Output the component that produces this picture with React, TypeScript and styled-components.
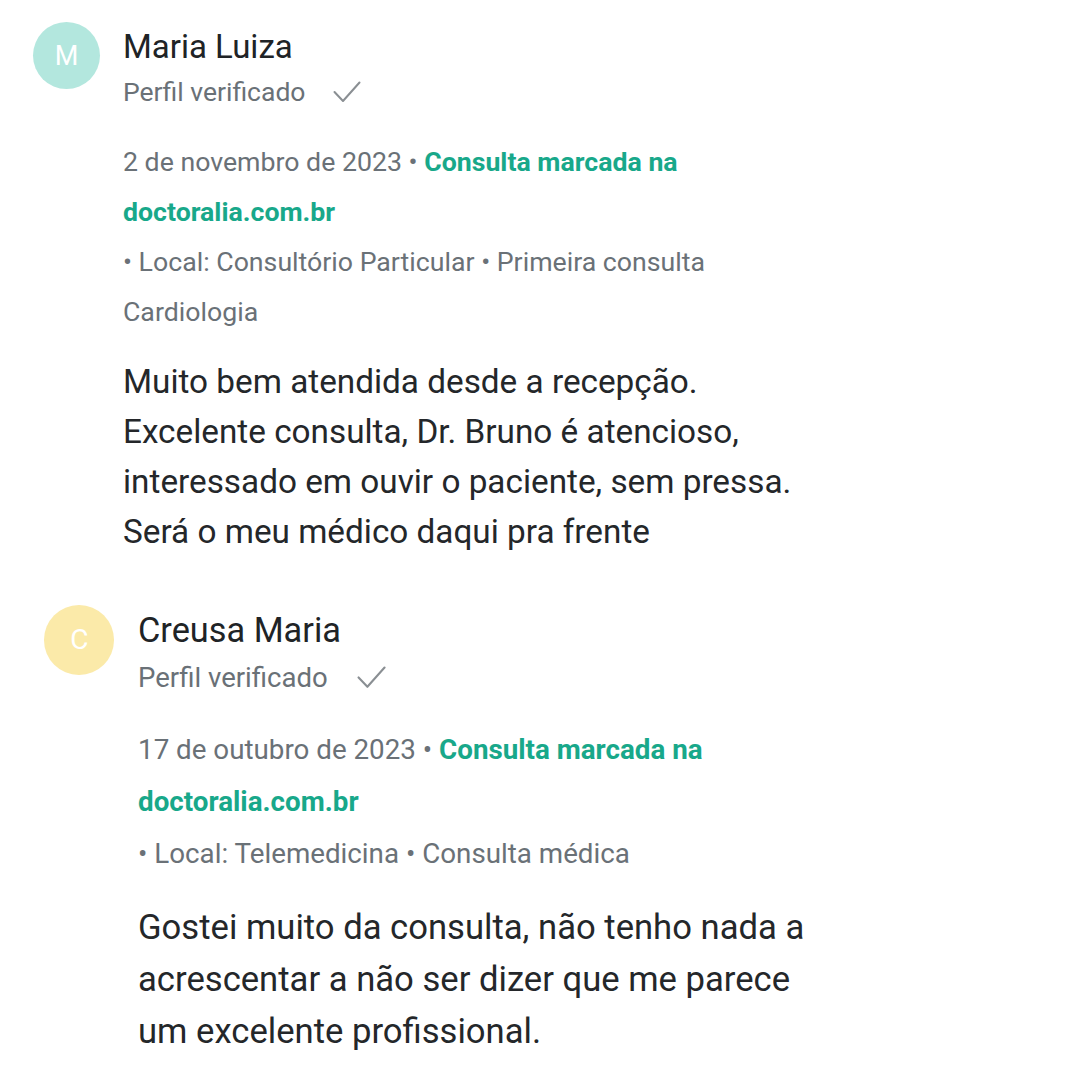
import React from "react";
import styled, { createGlobalStyle } from "styled-components";

type review = {
    initial: string,
    avatarColor: string,
    name: string,
    date: string,
    local: string,
    visit: string,
    specialty?: string,
    text: string[],
    zoom?: number,
    shift?: number,
}

const GlobalStyle = createGlobalStyle`
  body {
    margin: 0;
    background: #ffffff;
    font-family: Roboto, "Noto Sans", "Liberation Sans", sans-serif;
  }
`;

const Page = styled.div`
  display: flex;
  flex-direction: column;
  gap: 51px;
  padding: 25px 0 0 33px;
  width: 1080px;
  height: 1080px;
  box-sizing: border-box;
  overflow: hidden;
`;

const Card = styled.article<{ $zoom: number, $shift: number }>`
  display: grid;
  grid-template-columns: 90px 1fr;
  zoom: ${p => p.$zoom};
  margin-left: ${p => p.$shift}px;
`;

const Avatar = styled.div<{ $color: string }>`
  width: 67px;
  height: 67px;
  margin-top: -3px;
  border-radius: 50%;
  background: ${p => p.$color};
  color: #ffffff;
  font-size: 27px;
  display: flex;
  align-items: center;
  justify-content: center;
`;

const Content = styled.div`
  display: flex;
  flex-direction: column;
`;

const Name = styled.div`
  font-size: 33px;
  line-height: 44px;
  color: #202326;
`;

const Verified = styled.div`
  display: flex;
  align-items: center;
  gap: 28px;
  font-size: 26.5px;
  line-height: 46px;
  color: #6a7177;
`;

const Meta = styled.div`
  margin-top: 22px;
  font-size: 26.7px;
  line-height: 50px;
  color: #6a7177;
`;

const Link = styled.span`
  color: #18a88a;
  font-weight: 700;
`;

const Body = styled.p`
  margin: 20px 0 0;
  font-size: 33.3px;
  line-height: 50px;
  color: #24272a;
`;

const Check = () => (
    <svg width="28" height="22" viewBox="0 0 28 22" fill="none">
        <path d="M1.5 11 L10 20 L26.5 1.5" stroke="#8a8f93" strokeWidth="2" strokeLinecap="round" strokeLinejoin="round" />
    </svg>
);

const Review = ({ initial, avatarColor, name, date, local, visit, specialty, text, zoom = 1, shift = 0 }: review) => (
    <Card $zoom={zoom} $shift={shift}>
        <Avatar $color={avatarColor}>{initial}</Avatar>
        <Content>
            <Name>{name}</Name>
            <Verified>Perfil verificado <Check /></Verified>
            <Meta>
                {date} • <Link>Consulta marcada na</Link>
                <br />
                <Link>doctoralia.com.br</Link>
                <br />
                • Local: {local} • {visit}
                {specialty && <><br />{specialty}</>}
            </Meta>
            <Body>
                {text.map((line, i) => <React.Fragment key={i}>{i > 0 && <br />}{line}</React.Fragment>)}
            </Body>
        </Content>
    </Card>
);

export default function App() {
    return (
        <>
            <GlobalStyle />
            <Page>
                <Review
                    initial="M"
                    avatarColor="#b3e7de"
                    name="Maria Luiza"
                    date="2 de novembro de 2023"
                    local="Consultório Particular"
                    visit="Primeira consulta"
                    specialty="Cardiologia"
                    text={[
                        "Muito bem atendida desde a recepção.",
                        "Excelente consulta, Dr. Bruno é atencioso,",
                        "interessado em ouvir o paciente, sem pressa.",
                        "Será o meu médico daqui pra frente",
                    ]}
                />
                <Review
                    initial="C"
                    avatarColor="#fbeaa9"
                    name="Creusa Maria"
                    date="17 de outubro de 2023"
                    local="Telemedicina"
                    visit="Consulta médica"
                    text={[
                        "Gostei muito da consulta, não tenho nada a",
                        "acrescentar a não ser dizer que me parece",
                        "um excelente profissional.",
                    ]}
                    zoom={1.04}
                    shift={11}
                />
            </Page>
        </>
    );
}
